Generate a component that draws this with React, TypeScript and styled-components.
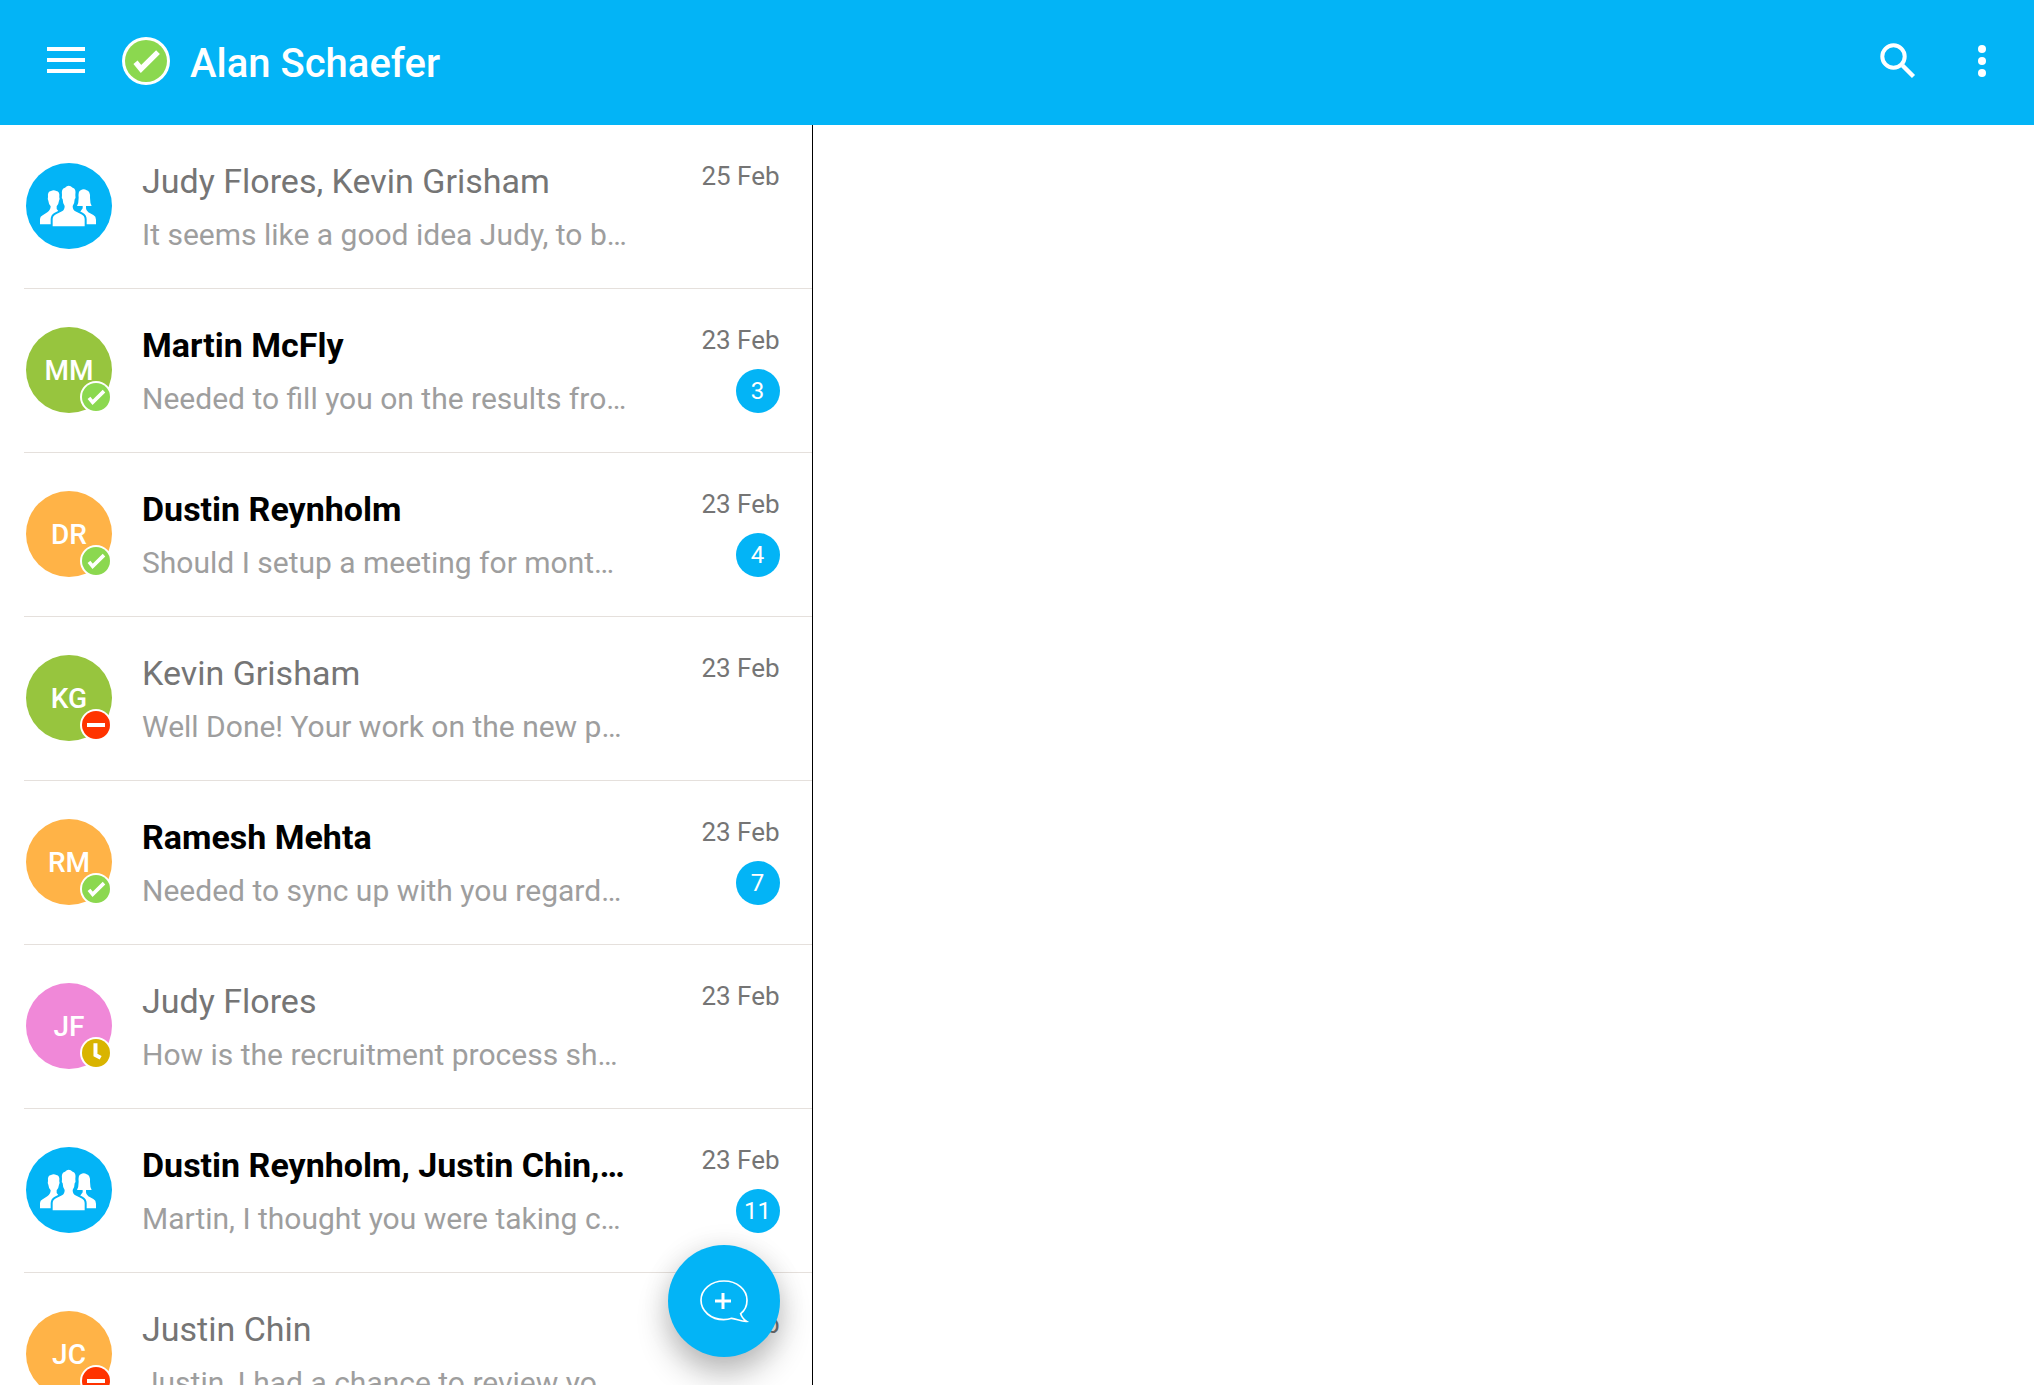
import React from "react";
import styled, { createGlobalStyle } from "styled-components";

const GlobalStyle = createGlobalStyle`
  * { box-sizing: border-box; }
  html, body { margin: 0; height: 100%; }
  body { background: #fff; overflow: hidden; }
  body, button { font-family: Roboto, "Noto Sans", sans-serif; }
`;

const sky = "#03b4f6";

const Page = styled.div`
  display: flex;
  flex-direction: column;
  height: 100vh;
`;

const Header = styled.header`
  display: flex;
  align-items: center;
  flex: none;
  height: 125px;
  padding: 0 28px 3px 42px;
  background: ${sky};
  color: #fff;
`;

const IconButton = styled.button`
  display: flex;
  align-items: center;
  justify-content: center;
  width: 48px;
  height: 48px;
  padding: 0;
  border: 0;
  background: none;
  color: inherit;
  cursor: pointer;
`;

const HeaderStatus = styled.span`
  display: flex;
  margin-left: 32px;
`;

const Title = styled.h1`
  flex: 1;
  margin: 0 0 0 20px;
  padding-top: 6px;
  font-size: 40px;
  line-height: 48px;
  font-weight: 500;
`;

const Actions = styled.div`
  display: flex;
  gap: 36px;
`;

const Body = styled.div`
  display: flex;
  flex: 1;
  min-height: 0;
`;

const Sidebar = styled.aside`
  position: relative;
  flex: none;
  width: calc(40% - 1px);
  border-right: 1px solid #000;
  overflow: hidden;
`;

const Detail = styled.main`
  flex: 1;
`;

const List = styled.ul`
  margin: 0;
  padding: 0 0 0 24px;
  height: 100%;
  overflow: hidden;
  list-style: none;
`;

const Item = styled.li`
  border-bottom: 1px solid #e5e0dc;
`;

const Row = styled.button`
  display: flex;
  align-items: flex-start;
  width: 100%;
  height: 163px;
  padding: 36px 32px 0 2px;
  border: 0;
  background: none;
  text-align: left;
  cursor: pointer;
`;

const Avatar = styled.span<{ $color: string }>`
  position: relative;
  display: flex;
  flex: none;
  align-items: center;
  justify-content: center;
  width: 86px;
  height: 86px;
  margin: 2px 30px 0 0;
  border-radius: 50%;
  background: ${(p) => p.$color};
  color: #fff;
  font-size: 28px;
  font-weight: 500;
`;

const Presence = styled.span`
  position: absolute;
  right: 0;
  bottom: 0;
  display: flex;
`;

const Summary = styled.span`
  display: flex;
  flex: 1;
  flex-direction: column;
  gap: 16px;
  min-width: 0;
  white-space: nowrap;
`;

const Name = styled.span<{ $unread: boolean }>`
  color: ${(p) => (p.$unread ? "#000" : "#757575")};
  font-size: 34px;
  line-height: 40px;
  font-weight: ${(p) => (p.$unread ? 700 : 400)};
`;

const Preview = styled.span`
  color: #9e9e9e;
  font-size: 30px;
  line-height: 36px;
`;

const Meta = styled.span`
  display: flex;
  flex: none;
  flex-direction: column;
  align-items: flex-end;
  gap: 14px;
`;

const When = styled.time`
  color: #757575;
  font-size: 26px;
  line-height: 30px;
`;

const Count = styled.span`
  display: flex;
  align-items: center;
  justify-content: center;
  width: 44px;
  height: 44px;
  border-radius: 50%;
  background: ${sky};
  color: #fff;
  font-size: 24px;
`;

const Fab = styled.button`
  position: absolute;
  right: 32px;
  bottom: 28px;
  width: 112px;
  height: 112px;
  padding: 0;
  border: 0;
  border-radius: 50%;
  background: ${sky};
  box-shadow: 0 18px 32px rgba(0, 0, 0, 0.24), 0 2px 28px rgba(0, 0, 0, 0.1);
  cursor: pointer;
`;

type Status = "online" | "busy" | "away";

const statusColor: Record<Status, string> = {
  online: "#8bd84f",
  busy: "#ff3300",
  away: "#d9b400",
};

function StatusIcon({ status, size }: { status: Status; size: number }) {
  return (
    <svg width={size} height={size} viewBox="0 0 48 48" role="img" aria-label={status}>
      <circle cx="24" cy="24" r="24" fill="#fff" />
      <circle cx="24" cy="24" r="21" fill={statusColor[status]} />
      {status === "online" && (
        <path d="M13.5 25.3 19 32 36 15.2" fill="none" stroke="#fff" strokeWidth="5.4" />
      )}
      {status === "busy" && <rect x="10.5" y="21" width="27" height="6" fill="#fff" />}
      {status === "away" && (
        <path d="M23.2 9.5V27L31 31.3" fill="none" stroke="#fff" strokeWidth="6" />
      )}
    </svg>
  );
}

function GroupIcon() {
  return (
    <svg width="86" height="86" viewBox="0 0 258 258" aria-hidden="true">
      <g fill="#fff">
        <path d="M42 184V168Q42 160 50 157L64 148Q74 141 74 130Q68 123 67 113Q64 109 66 102Q64 86 75 84Q83 79 91 84Q102 85 100 102Q102 109 99 113Q98 123 92 130V138L100 148L84 184Z" />
        <path d="M210 184V170Q210 160 202 156L187 148Q180 143 180 136V129H197Q192 120 192 104Q193 84 182 82Q173 75 164 82Q156 85 158 104Q158 120 153 129H170V136L160 150L172 184Z" />
      </g>
      <path
        d="M80 190V169Q80 159 90 154L108 145Q116 141 116 129Q110 120 110 109Q106 105 108 96Q105 76 117 74Q128 62 140 74Q151 76 148 96Q150 105 146 109Q146 120 140 129Q140 141 148 145L166 154Q176 159 176 169V190Z"
        fill="#fff"
        stroke={sky}
        strokeWidth="12"
        paintOrder="stroke"
      />
    </svg>
  );
}

type Conversation = {
  name: string;
  preview: string;
  date: string;
  initials?: string;
  color: string;
  status?: Status;
  unread?: number;
};

const green = "#97c53e";
const orange = "#ffb347";

const conversations: Conversation[] = [
  { name: "Judy Flores, Kevin Grisham", preview: "It seems like a good idea Judy, to b…", date: "25 Feb", color: sky },
  { name: "Martin McFly", preview: "Needed to fill you on the results fro…", date: "23 Feb", initials: "MM", color: green, status: "online", unread: 3 },
  { name: "Dustin Reynholm", preview: "Should I setup a meeting for mont…", date: "23 Feb", initials: "DR", color: orange, status: "online", unread: 4 },
  { name: "Kevin Grisham", preview: "Well Done! Your work on the new p…", date: "23 Feb", initials: "KG", color: green, status: "busy" },
  { name: "Ramesh Mehta", preview: "Needed to sync up with you regard…", date: "23 Feb", initials: "RM", color: orange, status: "online", unread: 7 },
  { name: "Judy Flores", preview: "How is the recruitment process sh…", date: "23 Feb", initials: "JF", color: "#f088d8", status: "away" },
  { name: "Dustin Reynholm, Justin Chin,…", preview: "Martin, I thought you were taking c…", date: "23 Feb", color: sky, unread: 11 },
  { name: "Justin Chin", preview: "Justin, I had a chance to review yo…", date: "23 Feb", initials: "JC", color: orange, status: "busy" },
];

function ConversationRow({ item }: { item: Conversation }) {
  return (
    <Item>
      <Row type="button">
        <Avatar $color={item.color}>
          {item.initials ?? <GroupIcon />}
          {item.status && (
            <Presence>
              <StatusIcon status={item.status} size={32} />
            </Presence>
          )}
        </Avatar>
        <Summary>
          <Name $unread={item.unread !== undefined}>{item.name}</Name>
          <Preview>{item.preview}</Preview>
        </Summary>
        <Meta>
          <When>{item.date}</When>
          {item.unread !== undefined && <Count>{item.unread}</Count>}
        </Meta>
      </Row>
    </Item>
  );
}

export default function App() {
  return (
    <Page>
      <GlobalStyle />
      <Header>
        <IconButton type="button" aria-label="Menu">
          <svg width="48" height="48" viewBox="0 0 48 48" fill="currentColor" aria-hidden="true">
            <path d="M5 10h38v4H5zM5 21h38v4H5zM5 32h38v4H5z" />
          </svg>
        </IconButton>
        <HeaderStatus>
          <StatusIcon status="online" size={48} />
        </HeaderStatus>
        <Title>Alan Schaefer</Title>
        <Actions>
          <IconButton type="button" aria-label="Search">
            <svg width="48" height="48" viewBox="0 0 48 48" fill="none" stroke="currentColor" aria-hidden="true">
              <circle cx="19.5" cy="19.5" r="11.2" strokeWidth="4" />
              <path d="M28.5 28.5 39.5 39.5" strokeWidth="4.4" />
            </svg>
          </IconButton>
          <IconButton type="button" aria-label="More options">
            <svg width="48" height="48" viewBox="0 0 48 48" fill="currentColor" aria-hidden="true">
              <circle cx="24" cy="12" r="4" />
              <circle cx="24" cy="24" r="4" />
              <circle cx="24" cy="36" r="4" />
            </svg>
          </IconButton>
        </Actions>
      </Header>
      <Body>
        <Sidebar>
          <List>
            {conversations.map((item) => (
              <ConversationRow key={item.name} item={item} />
            ))}
          </List>
          <Fab type="button" aria-label="New conversation">
            <svg width="112" height="112" viewBox="0 0 336 336" fill="none" stroke="#fff" aria-hidden="true">
              <path
                d="M191 220C183 223 175 224 167 224C129 224 99 198 99 166C99 133 129 108 168 108C207 108 237 133 237 166C237 182 230 197 218 206C221 216 227 223 236 229C221 230 206 222 191 220Z"
                strokeWidth="5"
              />
              <path d="M165 144V192M141 168H189" strokeWidth="9" />
            </svg>
          </Fab>
        </Sidebar>
        <Detail />
      </Body>
    </Page>
  );
}
